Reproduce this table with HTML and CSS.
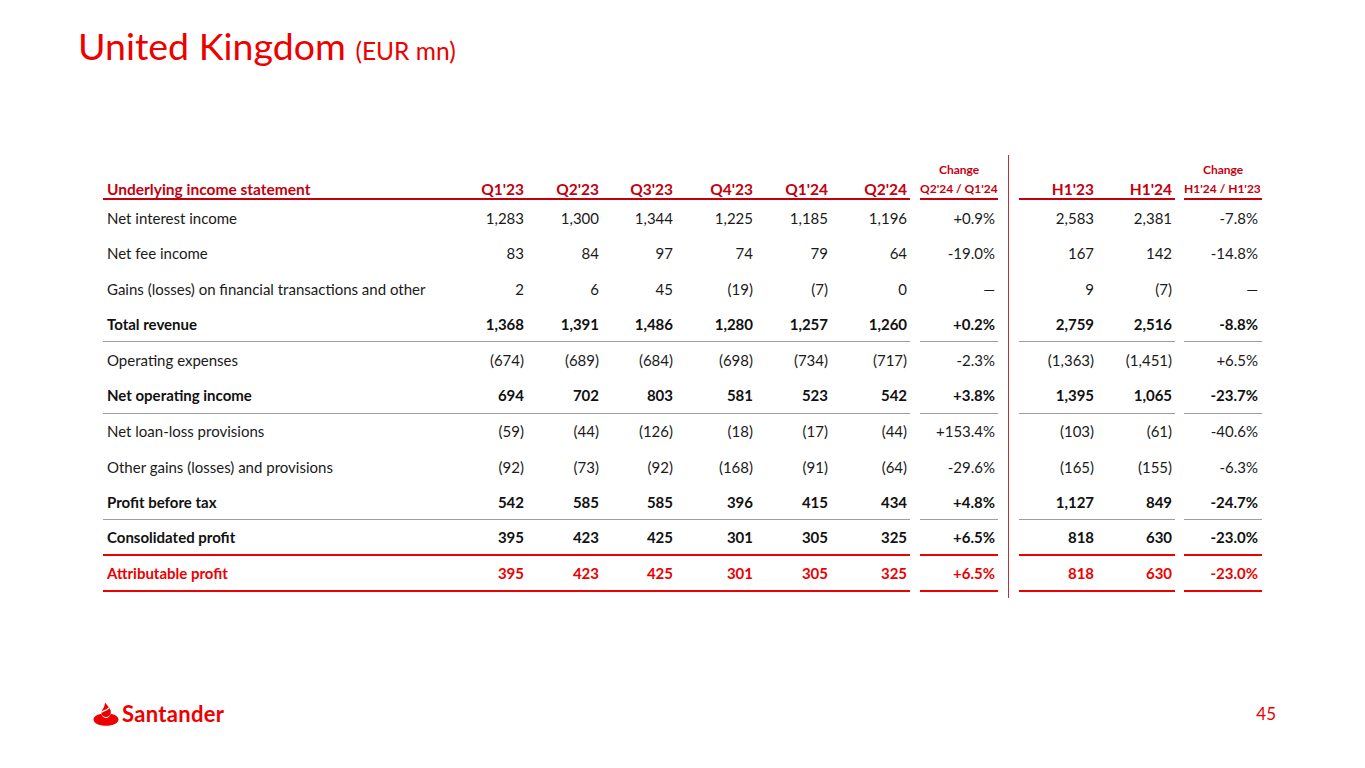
FILE: index.html
```html
<!DOCTYPE html>
<html lang="en">
<head>
<meta charset="utf-8">
<title>United Kingdom (EUR mn)</title>
<link rel="stylesheet" href="styles.css">
</head>
<body>
<div class="slide">
  <h1 class="title">United Kingdom <span class="unit">(EUR mn)</span></h1>

  <table class="pl">
    <colgroup>
      <col class="c-label"><col class="c-q1"><col class="c-q2"><col class="c-q3"><col class="c-q4"><col class="c-q5"><col class="c-q6">
      <col class="c-gap1"><col class="c-chg"><col class="c-div"><col class="c-h"><col class="c-h"><col class="c-gap2"><col class="c-chg">
    </colgroup>
    <thead>
      <tr class="top">
        <th colspan="7"></th><th class="gap"></th><th class="chg-t">Change</th><th class="div"></th><th colspan="2"></th><th class="gap"></th><th class="chg-t">Change</th>
      </tr>
      <tr class="head">
        <th class="lbl">Underlying income statement</th>
        <th>Q1'23</th><th>Q2'23</th><th>Q3'23</th><th>Q4'23</th><th>Q1'24</th><th>Q2'24</th>
        <th class="gap"></th><th class="chg-s">Q2'24 / Q1'24</th><th class="div"></th>
        <th>H1'23</th><th class="h2">H1'24</th><th class="gap"></th><th class="chg-s">H1'24 / H1'23</th>
      </tr>
    </thead>
    <tbody>
      <tr>
        <td class="lbl">Net interest income</td>
        <td>1,283</td><td>1,300</td><td>1,344</td><td>1,225</td><td>1,185</td><td>1,196</td>
        <td class="gap"></td><td class="chg">+0.9%</td><td class="div"></td>
        <td>2,583</td><td class="h2">2,381</td><td class="gap"></td><td class="chg2">-7.8%</td>
      </tr>
      <tr>
        <td class="lbl">Net fee income</td>
        <td>83</td><td>84</td><td>97</td><td>74</td><td>79</td><td>64</td>
        <td class="gap"></td><td class="chg">-19.0%</td><td class="div"></td>
        <td>167</td><td class="h2">142</td><td class="gap"></td><td class="chg2">-14.8%</td>
      </tr>
      <tr>
        <td class="lbl">Gains (losses) on financial transactions and other</td>
        <td>2</td><td>6</td><td>45</td><td>(19)</td><td>(7)</td><td>0</td>
        <td class="gap"></td><td class="chg">—</td><td class="div"></td>
        <td>9</td><td class="h2">(7)</td><td class="gap"></td><td class="chg2">—</td>
      </tr>
      <tr class="bold grey">
        <td class="lbl">Total revenue</td>
        <td>1,368</td><td>1,391</td><td>1,486</td><td>1,280</td><td>1,257</td><td>1,260</td>
        <td class="gap"></td><td class="chg">+0.2%</td><td class="div"></td>
        <td>2,759</td><td class="h2">2,516</td><td class="gap"></td><td class="chg2">-8.8%</td>
      </tr>
      <tr>
        <td class="lbl">Operating expenses</td>
        <td>(674)</td><td>(689)</td><td>(684)</td><td>(698)</td><td>(734)</td><td>(717)</td>
        <td class="gap"></td><td class="chg">-2.3%</td><td class="div"></td>
        <td>(1,363)</td><td class="h2">(1,451)</td><td class="gap"></td><td class="chg2">+6.5%</td>
      </tr>
      <tr class="bold grey">
        <td class="lbl">Net operating income</td>
        <td>694</td><td>702</td><td>803</td><td>581</td><td>523</td><td>542</td>
        <td class="gap"></td><td class="chg">+3.8%</td><td class="div"></td>
        <td>1,395</td><td class="h2">1,065</td><td class="gap"></td><td class="chg2">-23.7%</td>
      </tr>
      <tr>
        <td class="lbl">Net loan-loss provisions</td>
        <td>(59)</td><td>(44)</td><td>(126)</td><td>(18)</td><td>(17)</td><td>(44)</td>
        <td class="gap"></td><td class="chg">+153.4%</td><td class="div"></td>
        <td>(103)</td><td class="h2">(61)</td><td class="gap"></td><td class="chg2">-40.6%</td>
      </tr>
      <tr>
        <td class="lbl">Other gains (losses) and provisions</td>
        <td>(92)</td><td>(73)</td><td>(92)</td><td>(168)</td><td>(91)</td><td>(64)</td>
        <td class="gap"></td><td class="chg">-29.6%</td><td class="div"></td>
        <td>(165)</td><td class="h2">(155)</td><td class="gap"></td><td class="chg2">-6.3%</td>
      </tr>
      <tr class="bold grey">
        <td class="lbl">Profit before tax</td>
        <td>542</td><td>585</td><td>585</td><td>396</td><td>415</td><td>434</td>
        <td class="gap"></td><td class="chg">+4.8%</td><td class="div"></td>
        <td>1,127</td><td class="h2">849</td><td class="gap"></td><td class="chg2">-24.7%</td>
      </tr>
      <tr class="bold red-line">
        <td class="lbl">Consolidated profit</td>
        <td>395</td><td>423</td><td>425</td><td>301</td><td>305</td><td>325</td>
        <td class="gap"></td><td class="chg">+6.5%</td><td class="div"></td>
        <td>818</td><td class="h2">630</td><td class="gap"></td><td class="chg2">-23.0%</td>
      </tr>
      <tr class="bold red-line attr">
        <td class="lbl">Attributable profit</td>
        <td>395</td><td>423</td><td>425</td><td>301</td><td>305</td><td>325</td>
        <td class="gap"></td><td class="chg">+6.5%</td><td class="div"></td>
        <td>818</td><td class="h2">630</td><td class="gap"></td><td class="chg2">-23.0%</td>
      </tr>
      <tr class="tail">
        <td colspan="9"></td><td class="div"></td><td colspan="4"></td>
      </tr>
    </tbody>
  </table>

  <footer class="foot">
    <div class="brand">
      <svg class="flame" viewBox="0 0 26 24" width="26" height="24" aria-hidden="true">
        <path fill="#ec0000" d="M0.5 17 C1 14 5 12.4 8.4 11.8 C8.7 14.4 10.6 16 13 16 C15.4 16 17.3 14.4 17.6 11.8 C21 12.4 25 14 25.5 17 C25.8 21 20 23.8 13 23.8 C6 23.8 0.2 21 0.5 17 Z"/>
        <path fill="#ec0000" d="M12 0.5 C14.5 4 18.5 7 17.8 11 C17.4 13.6 15.4 15 13 15 C10.6 15 8.6 13.6 8.4 11.2 C8.2 8.4 10.4 7 11.2 4.4 C11.6 3 11.8 1.8 12 0.5 Z"/>
        <path fill="none" stroke="#ffffff" stroke-width="1.4" d="M8.4 10.2 C11 9 14.4 8 16.6 5.4"/>
      </svg>
      <span class="brand-name">Santander</span>
    </div>
    <span class="page">45</span>
  </footer>
</div>
</body>
</html>
```

FILE: styles.css
```css
* { box-sizing: border-box; }
html, body { margin: 0; padding: 0; background: #ffffff; }
body { font-family: Lato, "Open Sans", "Liberation Sans", sans-serif; color: #1a1a1a; }

.slide {
  width: 1365px;
  height: 768px;
  display: flex;
  flex-direction: column;
  overflow: hidden;
}

.title {
  margin: 23px 0 0 78px;
  font-size: 37.5px;
  line-height: 46px;
  font-weight: 400;
  color: #ec0000;
}
.title .unit { font-size: 24.5px; }

.pl {
  margin: 81px 0 0 103px;
  width: 1159px;
  table-layout: fixed;
  border-collapse: separate;
  border-spacing: 0;
  font-size: 15px;
}
.c-label { width: 347px; }
.c-q1 { width: 77px; }
.c-q2 { width: 75px; }
.c-q3 { width: 74px; }
.c-q4 { width: 80px; }
.c-q5 { width: 75px; }
.c-q6 { width: 79px; }
.c-gap1 { width: 10px; }
.c-chg { width: 78px; }
.c-div { width: 21px; }
.c-h { width: 78px; }
.c-gap2 { width: 9px; }

.pl th, .pl td {
  padding: 0 3px 0 0;
  text-align: right;
  white-space: nowrap;
}
.pl .lbl { text-align: left; padding-left: 4px; }
.pl .h2 { padding-right: 3px; }
.pl .chg2 { padding-right: 4px; }

.pl .div {
  padding: 0;
  background: linear-gradient(#b8323a, #b8323a) no-repeat 10px 0 / 1px 100%;
}
.pl .gap { padding: 0; }

.top th { height: 24px; vertical-align: bottom; }
.chg-t {
  font-size: 12px;
  font-weight: 700;
  color: #c4000f;
  text-align: center !important;
  padding: 0 0 2px 0 !important;
}
.head th {
  height: 21px;
  vertical-align: bottom;
  padding-bottom: 0;
  line-height: 18px;
  font-size: 15.5px;
  font-weight: 700;
  color: #c4000f;
  border-bottom: 2px solid #c4000f;
}
.head th.gap, .head th.div { border-bottom: none; }
.head th.chg-s { font-size: 12px; padding-right: 2px; padding-bottom: 2px; line-height: 15px; }

tbody td { height: 35.6px; vertical-align: middle; }
.bold td { font-weight: 700; color: #111; }
tr.grey > td:not(.gap):not(.div) { border-bottom: 1px solid #9e9e9e; }
tr.red-line > td:not(.gap):not(.div) {
  border-bottom-width: 2px;
  border-bottom-style: solid;
  border-bottom-color: #ec0000;
}
.attr td { color: #ec0000; }
.tail td { height: 6px; }

.foot {
  margin-top: auto;
  margin-bottom: 42px;
  padding: 0 89px 0 93px;
  display: flex;
  justify-content: space-between;
  align-items: center;
}
.brand { display: flex; align-items: center; gap: 3px; }
.flame { display: block; }
.brand-name {
  font-size: 22px;
  font-weight: 700;
  color: #ec0000;
  letter-spacing: 0.3px;
  line-height: 24px;
}
.page {
  font-size: 17px;
  color: #ec0000;
  line-height: 20px;
}
```
